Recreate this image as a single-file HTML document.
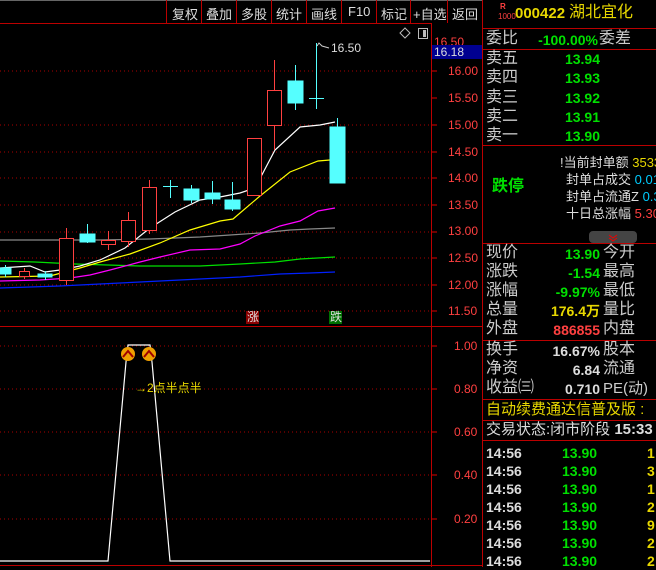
<!DOCTYPE html><html><head><meta charset="utf-8"><style>
*{margin:0;padding:0;box-sizing:border-box}
body{width:656px;height:567px;background:#000;overflow:hidden;position:relative;font-family:"Liberation Sans","Noto Sans CJK SC",sans-serif;}
.a{position:absolute;white-space:nowrap;line-height:1}
.tb{position:absolute;top:4px;color:#ddd;font-size:13px}
.g{color:#00e000}.w{color:#ddd}.y{color:#e8d800}.r{color:#ff4040}.c{color:#00ccff}
.lab{position:absolute;font-size:16px;color:#ccc;line-height:1}
.num{position:absolute;font-size:14px;font-weight:bold;line-height:1;text-align:right}
</style></head><body>
<svg class="a" style="left:0;top:0" width="656" height="567">
<line x1="0" y1="0.5" x2="483" y2="0.5" stroke="#666"/>
<g stroke="#b00" stroke-width="1">
<line x1="0" y1="23.5" x2="431" y2="23.5"/>
<line x1="166.5" y1="0" x2="166.5" y2="23"/><line x1="201.5" y1="0" x2="201.5" y2="23"/><line x1="236.5" y1="0" x2="236.5" y2="23"/><line x1="271.5" y1="0" x2="271.5" y2="23"/><line x1="306.5" y1="0" x2="306.5" y2="23"/><line x1="341.5" y1="0" x2="341.5" y2="23"/><line x1="376.5" y1="0" x2="376.5" y2="23"/><line x1="410.5" y1="0" x2="410.5" y2="23"/><line x1="447.5" y1="0" x2="447.5" y2="23"/>
<line x1="431.5" y1="23" x2="431.5" y2="567"/>
<line x1="482.5" y1="0" x2="482.5" y2="567"/>
<line x1="0" y1="326.5" x2="483" y2="326.5"/>
<line x1="0" y1="565.5" x2="483" y2="565.5"/>
<line x1="483" y1="28.5" x2="656" y2="28.5"/>
<line x1="483" y1="49.5" x2="656" y2="49.5"/>
<line x1="483" y1="145.5" x2="656" y2="145.5"/>
<line x1="483" y1="243.5" x2="656" y2="243.5"/>
<line x1="483" y1="340.5" x2="656" y2="340.5"/>
<line x1="483" y1="399.5" x2="656" y2="399.5"/>
<line x1="483" y1="420.5" x2="656" y2="420.5"/>
<line x1="483" y1="440.5" x2="656" y2="440.5"/>
</g>
<g stroke="#a00" stroke-dasharray="1,3">
<line x1="0" y1="71" x2="430" y2="71"/><line x1="0" y1="125" x2="430" y2="125"/><line x1="0" y1="152" x2="430" y2="152"/><line x1="0" y1="178" x2="430" y2="178"/><line x1="0" y1="205" x2="430" y2="205"/><line x1="0" y1="232" x2="430" y2="232"/><line x1="0" y1="258" x2="430" y2="258"/><line x1="0" y1="285" x2="430" y2="285"/><line x1="0" y1="311" x2="430" y2="311"/>
<line x1="0" y1="346" x2="430" y2="346"/><line x1="0" y1="389" x2="430" y2="389"/><line x1="0" y1="432" x2="430" y2="432"/><line x1="0" y1="475" x2="430" y2="475"/><line x1="0" y1="519" x2="430" y2="519"/>
</g>
<g stroke="#d00"><line x1="432" y1="71" x2="437" y2="71"/><line x1="432" y1="98" x2="437" y2="98"/><line x1="432" y1="125" x2="437" y2="125"/><line x1="432" y1="152" x2="437" y2="152"/><line x1="432" y1="178" x2="437" y2="178"/><line x1="432" y1="205" x2="437" y2="205"/><line x1="432" y1="232" x2="437" y2="232"/><line x1="432" y1="258" x2="437" y2="258"/><line x1="432" y1="285" x2="437" y2="285"/><line x1="432" y1="311" x2="437" y2="311"/>
<line x1="432" y1="346" x2="437" y2="346"/><line x1="432" y1="389" x2="437" y2="389"/><line x1="432" y1="432" x2="437" y2="432"/><line x1="432" y1="475" x2="437" y2="475"/><line x1="432" y1="519" x2="437" y2="519"/></g>
<g fill="none" stroke-width="1.2">
<polyline stroke="#888" points="0,240 100,240 150,239 200,237 230,235 260,233 290,230 310,229 335,228"/>
<polyline stroke="#00e000" points="0,261 35,262 75,264 140,266 200,266 240,264 275,262 300,259 335,257"/>
<polyline stroke="#0020ff" points="0,288 60,286 100,284 140,282 200,279 240,277 280,274 310,273 335,272"/>
<polyline stroke="#ff00ff" points="0,281 40,280 70,278 90,275 110,270 140,262 160,257 190,250 220,249 240,244 255,236 280,226 300,221 318,211 335,208"/>
<polyline stroke="#ffff00" points="0,277 50,276 80,268 100,262 130,254 160,243 190,230 220,221 233,219 260,196 290,172 318,161 330,160"/>
<polyline stroke="#fff" points="0,268 30,266 45,272 60,270 80,266 100,260 125,248 150,228 175,212 200,200 220,197 240,193 255,188 275,150 300,127 320,125 335,122"/>
</g>
<g stroke="#ff4040" fill="#000">
<line x1="24.5" y1="268" x2="24.5" y2="279"/><rect x="19.5" y="271.5" width="10" height="5"/>
<line x1="66.5" y1="228" x2="66.5" y2="285"/><rect x="59.5" y="238.5" width="14" height="42"/>
<line x1="108.5" y1="231" x2="108.5" y2="250"/><rect x="101.5" y="240.5" width="14" height="4"/>
<line x1="128.5" y1="212" x2="128.5" y2="247"/><rect x="121.5" y="220.5" width="14" height="21"/>
<line x1="149.5" y1="180" x2="149.5" y2="234"/><rect x="142.5" y="187.5" width="14" height="43"/>
<line x1="254.5" y1="138" x2="254.5" y2="195"/><rect x="247.5" y="138.5" width="14" height="57"/>
<line x1="274.5" y1="60" x2="274.5" y2="150"/><rect x="267.5" y="90.5" width="14" height="35"/>
</g>
<g stroke="#55ffff" fill="#55ffff">
<line x1="5.5" y1="265" x2="5.5" y2="277"/><rect x="0" y="268" width="11" height="6"/>
<line x1="45.5" y1="271" x2="45.5" y2="280"/><rect x="38" y="274" width="14" height="3"/>
<line x1="87.5" y1="224" x2="87.5" y2="243"/><rect x="80" y="234" width="15" height="8"/>
<line x1="170.5" y1="180" x2="170.5" y2="198"/><line x1="163" y1="186.5" x2="178" y2="186.5"/>
<line x1="191.5" y1="185" x2="191.5" y2="203"/><rect x="184" y="189" width="15" height="11"/>
<line x1="212.5" y1="181" x2="212.5" y2="204"/><rect x="205" y="193" width="15" height="6"/>
<line x1="232.5" y1="182" x2="232.5" y2="211"/><rect x="225" y="200" width="15" height="9"/>
<line x1="295.5" y1="65" x2="295.5" y2="110"/><rect x="288" y="81" width="15" height="22"/>
<line x1="316.5" y1="43" x2="316.5" y2="109"/><line x1="309" y1="98.5" x2="324" y2="98.5"/>
<line x1="337.5" y1="118" x2="337.5" y2="183"/><rect x="330" y="127" width="15" height="56"/>
</g>
<path d="M317 46 L319 43 L322 46 L329 48" stroke="#ccc" fill="none"/>
<path d="M405 28 L410 33 L405 38 L400 33Z" stroke="#bbb" fill="none"/>
<rect x="418.5" y="28.5" width="9" height="10" stroke="#bbb" fill="none"/><rect x="423" y="30" width="3" height="7" fill="#bbb"/>
<rect x="246" y="311" width="13" height="13" fill="#8b0000"/><rect x="329" y="311" width="13" height="13" fill="#007000"/>
<polyline fill="none" stroke="#fff" stroke-width="1.2" points="0,561 108,561 126,362 128,345 150,345 152,362 170,561 430,561"/>
<circle cx="128" cy="354" r="7" fill="#f0a000"/><circle cx="149" cy="354" r="7" fill="#f0a000"/>
<path d="M123 357 L128 351 L133 357 M144 357 L149 351 L154 357" stroke="#a00000" stroke-width="2" fill="none"/>
<rect x="589" y="231" width="48" height="12" rx="4" fill="#444"/>
<path d="M609 235 L613 238 L617 235 M609 238 L613 241 L617 238" stroke="#e00" fill="none"/>
</svg>
<div class="tb" style="left:172px">复权</div><div class="tb" style="left:206px">叠加</div><div class="tb" style="left:241px">多股</div><div class="tb" style="left:276px">统计</div><div class="tb" style="left:311px">画线</div><div class="tb" style="left:348px">F10</div><div class="tb" style="left:381px">标记</div><div class="tb" style="left:413px">+自选</div><div class="tb" style="left:452px">返回</div>
<div class="a r" style="left:434px;top:36px;font-size:12px">16.50</div>
<div class="a" style="left:432px;top:45px;width:50px;height:14px;background:#000090"></div>
<div class="a w" style="left:434px;top:46px;font-size:12px">16.18</div>
<div class="a r" style="left:448px;top:65px;font-size:12px">16.00</div><div class="a r" style="left:448px;top:92px;font-size:12px">15.50</div><div class="a r" style="left:448px;top:119px;font-size:12px">15.00</div><div class="a r" style="left:448px;top:146px;font-size:12px">14.50</div><div class="a r" style="left:448px;top:172px;font-size:12px">14.00</div><div class="a r" style="left:448px;top:199px;font-size:12px">13.50</div><div class="a r" style="left:448px;top:225px;font-size:12px">13.00</div><div class="a r" style="left:448px;top:252px;font-size:12px">12.50</div><div class="a r" style="left:448px;top:279px;font-size:12px">12.00</div><div class="a r" style="left:448px;top:305px;font-size:12px">11.50</div>
<div class="a r" style="left:454px;top:340px;font-size:12px">1.00</div><div class="a r" style="left:454px;top:383px;font-size:12px">0.80</div><div class="a r" style="left:454px;top:426px;font-size:12px">0.60</div><div class="a r" style="left:454px;top:469px;font-size:12px">0.40</div><div class="a r" style="left:454px;top:513px;font-size:12px">0.20</div>
<div class="a w" style="left:331px;top:42px;font-size:12px">16.50</div>
<div class="a w" style="left:247px;top:311px;font-size:12px">涨</div><div class="a w" style="left:330px;top:311px;font-size:12px">跌</div>
<div class="a y" style="left:135px;top:382px;font-size:12px">→2点半点半</div>
<div class="a r" style="left:500px;top:3px;font-size:8px;font-weight:bold">R</div><div class="a r" style="left:498px;top:13px;font-size:8px">1000</div>
<div class="a y" style="left:515px;top:6px;font-size:15px;font-weight:bold">000422</div><div class="a y" style="left:569px;top:5px;font-size:16px">湖北宜化</div>
<div class="lab" style="left:486px;top:31px">委比</div><div class="num g" style="left:530px;top:33px;width:68px">-100.00%</div><div class="lab" style="left:599px;top:31px">委差</div>
<div class="lab" style="left:486px;top:51px">卖五</div><div class="num g" style="left:540px;top:52px;width:60px">13.94</div>
<div class="lab" style="left:486px;top:70px">卖四</div><div class="num g" style="left:540px;top:71px;width:60px">13.93</div>
<div class="lab" style="left:486px;top:90px">卖三</div><div class="num g" style="left:540px;top:91px;width:60px">13.92</div>
<div class="lab" style="left:486px;top:109px">卖二</div><div class="num g" style="left:540px;top:110px;width:60px">13.91</div>
<div class="lab" style="left:486px;top:128px">卖一</div><div class="num g" style="left:540px;top:129px;width:60px">13.90</div>
<div class="a g" style="left:492px;top:179px;font-size:16px;font-weight:bold">跌停</div>
<div class="a w" style="left:560px;top:156px;font-size:13px">!当前封单额 <span class="y">3533</span></div>
<div class="a w" style="left:566px;top:173px;font-size:13px">封单占成交 <span class="c">0.01</span></div>
<div class="a w" style="left:566px;top:190px;font-size:13px">封单占流通Z <span class="c">0.3</span></div>
<div class="a w" style="left:566px;top:207px;font-size:13px">十日总涨幅 <span class="r">5.30</span></div>
<div class="lab" style="left:486px;top:245px">现价</div><div class="num g" style="left:530px;top:247px;width:70px">13.90</div><div class="lab" style="left:603px;top:245px">今开</div>
<div class="lab" style="left:486px;top:264px">涨跌</div><div class="num g" style="left:530px;top:266px;width:70px">-1.54</div><div class="lab" style="left:603px;top:264px">最高</div>
<div class="lab" style="left:486px;top:283px">涨幅</div><div class="num g" style="left:530px;top:285px;width:70px">-9.97%</div><div class="lab" style="left:603px;top:283px">最低</div>
<div class="lab" style="left:486px;top:302px">总量</div><div class="num y" style="left:530px;top:304px;width:70px">176.4万</div><div class="lab" style="left:603px;top:302px">量比</div>
<div class="lab" style="left:486px;top:321px">外盘</div><div class="num r" style="left:530px;top:323px;width:70px">886855</div><div class="lab" style="left:603px;top:321px">内盘</div>
<div class="lab" style="left:486px;top:342px">换手</div><div class="num w" style="left:530px;top:344px;width:70px">16.67%</div><div class="lab" style="left:603px;top:342px">股本</div>
<div class="lab" style="left:486px;top:361px">净资</div><div class="num w" style="left:530px;top:363px;width:70px">6.84</div><div class="lab" style="left:603px;top:361px">流通</div>
<div class="lab" style="left:486px;top:380px">收益㈢</div><div class="num w" style="left:530px;top:382px;width:70px">0.710</div><div class="lab" style="left:603px;top:381px;font-size:15px">PE(动)</div>
<div class="a y" style="left:486px;top:402px;font-size:15px">自动续费通达信普及版 :</div>
<div class="a w" style="left:486px;top:422px;font-size:15px">交易状态:闭市阶段 <b>15:33</b></div>
<div class="a" style="left:486px;top:444px;font-size:14px;font-weight:bold;line-height:18px;color:#ddd">14:56<br>14:56<br>14:56<br>14:56<br>14:56<br>14:56<br>14:56</div>
<div class="a g" style="left:562px;top:444px;font-size:14px;font-weight:bold;line-height:18px">13.90<br>13.90<br>13.90<br>13.90<br>13.90<br>13.90<br>13.90</div>
<div class="a y" style="left:647px;top:444px;font-size:14px;font-weight:bold;line-height:18px">1<br>3<br>1<br>2<br>9<br>2<br>2</div>
</body></html>
